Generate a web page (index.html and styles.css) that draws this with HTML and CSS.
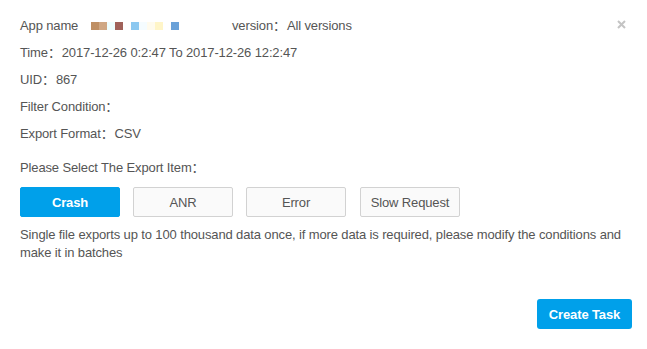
FILE: index.html
```html
<!DOCTYPE html>
<html>
<head>
<meta charset="utf-8">
<link rel="stylesheet" href="styles.css">
</head>
<body>
<div class="modal">
  <span class="close" aria-label="close">
    <svg width="9" height="9" viewBox="0 0 9 9"><path d="M1 1L8 8M8 1L1 8" stroke="#c4c4c4" stroke-width="2"/></svg>
  </span>
  <div class="row app-row">
    <span class="label">App name</span>
    <span class="swatches">
      <i style="background:#bf8f64"></i><i style="background:#cfa784"></i><i style="background:#eefeff"></i><i style="background:#a0625a"></i><i style="background:#ffffff"></i><i style="background:#8cc8f0"></i><i style="background:#f5fcff"></i><i style="background:#fffbee"></i><i style="background:#fff5c8"></i><i style="background:#ffffff"></i><i style="background:#6aa1d8"></i>
    </span>
    <span class="version">version：<span class="val">All versions</span></span>
  </div>
  <div class="row">Time：<span class="val">2017-12-26 0:2:47 To 2017-12-26 12:2:47</span></div>
  <div class="row">UID：<span class="val">867</span></div>
  <div class="row">Filter Condition：</div>
  <div class="row">Export Format：<span class="val">CSV</span></div>
  <div class="row select-title">Please Select The Export Item：</div>
  <div class="items">
    <button class="item active">Crash</button>
    <button class="item">ANR</button>
    <button class="item">Error</button>
    <button class="item">Slow Request</button>
  </div>
  <p class="note">Single file exports up to 100 thousand data once, if more data is required, please modify the conditions and make it in batches</p>
  <div class="footer">
    <button class="create">Create Task</button>
  </div>
</div>
</body>
</html>
```

FILE: styles.css
```css
html, body {
  margin: 0;
  padding: 0;
  background: #fff;
}
body {
  font-family: "Liberation Sans", Arial, "Noto Sans CJK SC", sans-serif;
  font-size: 13px;
  letter-spacing: -0.13px;
  color: #555;
}
.modal {
  position: relative;
  width: 647px;
  height: 349px;
  box-sizing: border-box;
  padding: 12px 15px 0 20px;
}
.close {
  position: absolute;
  top: 20px;
  left: 617px;
  width: 9px;
  height: 9px;
  display: block;
}
.close svg { display: block; }
.row {
  height: 27px;
  line-height: 27px;
  white-space: nowrap;
}
.val { margin-left: 1px; }
.app-row {
  display: flex;
  align-items: center;
}
.app-row .label { width: 71px; }
.swatches {
  display: flex;
  width: 141px;
}
.swatches i {
  display: block;
  width: 8px;
  height: 8px;
}
.select-title {
  margin-top: 7px;
}
.items {
  display: flex;
  gap: 13px;
  margin-top: 6px;
}
.item {
  width: 100px;
  height: 30px;
  box-sizing: border-box;
  border: 1px solid #d2d2d2;
  border-radius: 2px;
  background: #fafafa;
  color: #555;
  font-family: inherit;
  font-size: 13px;
  letter-spacing: inherit;
  padding: 0;
}
.item:nth-child(4) { margin-left: 1px; }
.item.active {
  background: #00a0ea;
  border-color: #00a0ea;
  color: #fff;
  font-weight: bold;
}
.note {
  margin: 9px 0 0 0;
  line-height: 18px;
}
.footer {
  display: flex;
  justify-content: flex-end;
  margin-top: 37px;
}
.create {
  width: 95px;
  height: 30px;
  border: none;
  border-radius: 3px;
  background: #00a0ea;
  color: #fff;
  font-family: inherit;
  font-size: 13px;
  letter-spacing: inherit;
  font-weight: bold;
  padding: 0;
}
```
